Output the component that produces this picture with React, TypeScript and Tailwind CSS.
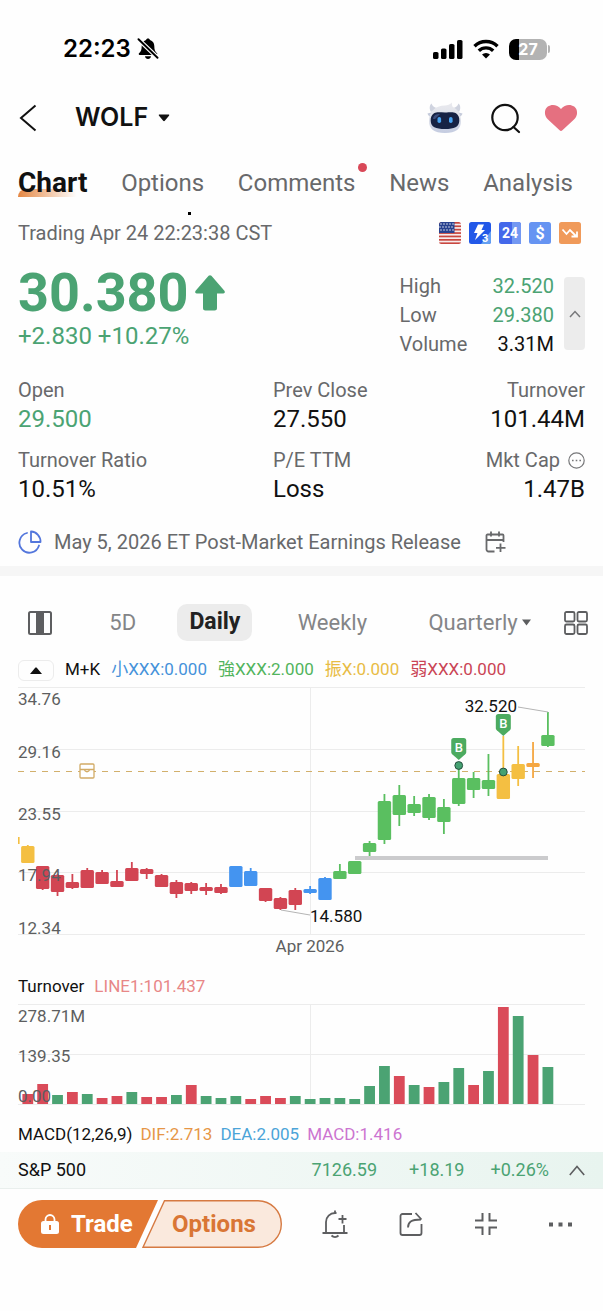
import type { ReactNode } from "react";
import clsx from "clsx";

type Tone = "red" | "green" | "blue" | "yellow" | "orange";

// tone, high, body top, body bottom, low (measured down from the top grid line)
type Candle = [Tone, number, number, number, number];

const TONES: Record<Tone, string> = {
  red: "#d24553",
  green: "#5abf60",
  blue: "#4494f0",
  yellow: "#f4bf42",
  orange: "#f5a742",
};

const CANDLES: Candle[] = [
  ["yellow", 158, 159, 176, 176],
  ["red", 179, 179, 202, 203],
  ["red", 187, 188, 205, 209],
  ["red", 187, 195, 201, 202],
  ["red", 181, 183, 201, 201],
  ["red", 183, 185, 197, 197],
  ["red", 183, 194, 200, 200],
  ["red", 175, 181, 194, 194],
  ["red", 181, 182, 187, 192],
  ["red", 187, 188, 200, 200],
  ["red", 193, 195, 207, 211],
  ["red", 195, 196, 204, 207],
  ["red", 196, 200, 204, 208],
  ["red", 197, 200, 206, 207],
  ["blue", 179, 179, 200, 200],
  ["blue", 181, 184, 199, 199],
  ["red", 201, 201, 214, 215],
  ["red", 210, 211, 222, 223],
  ["red", 201, 203, 218, 223],
  ["blue", 199, 202, 206, 207],
  ["blue", 190, 191, 213, 213],
  ["green", 177, 184, 192, 192],
  ["green", 174, 174, 187, 187],
  ["green", 154, 156, 165, 169],
  ["green", 107, 114, 153, 157],
  ["green", 98, 108, 128, 139],
  ["green", 109, 117, 126, 129],
  ["green", 107, 110, 131, 133],
  ["green", 112, 120, 135, 147],
  ["green", 79, 91, 117, 119],
  ["green", 85, 91, 103, 111],
  ["green", 67, 93, 102, 109],
  ["yellow", 49, 87, 112, 112],
  ["yellow", 59, 77, 92, 99],
  ["orange", 55, 76, 80, 91],
  ["green", 25, 48, 59, 60],
];

const TURNOVER: [number, "up" | "down"][] = [
  [10, "down"], [20, "down"], [9, "up"], [12, "down"], [10, "up"], [6, "down"],
  [8, "down"], [12, "up"], [7, "down"], [7, "down"], [9, "up"], [19, "down"],
  [8, "up"], [6, "up"], [8, "up"], [5, "down"], [8, "down"], [6, "down"],
  [8, "up"], [5, "up"], [6, "up"], [6, "up"], [5, "up"], [18, "up"],
  [38, "up"], [28, "down"], [19, "up"], [17, "down"], [22, "up"], [36, "up"],
  [19, "down"], [33, "up"], [97, "down"], [88, "up"], [49, "down"], [37, "up"],
];

const TABS = ["Chart", "Options", "Comments", "News", "Analysis"];

const centre = (i: number) => 9.8 + i * 14.86;

function IconButton({ label, children, className }: { label: string; children: ReactNode; className?: string }) {
  return (
    <button type="button" aria-label={label} className={clsx("flex items-center justify-center", className)}>
      {children}
    </button>
  );
}

function StatusBar() {
  return (
    <div className="flex h-[82px] items-center justify-between pt-4 pr-[53px] pl-[63px] text-black">
      <div className="flex items-center gap-1.5">
        <span className="font-[Inter] text-2xl font-semibold">22:23</span>
        <svg width="22" height="22" viewBox="0 0 22 22" fill="currentColor">
          <path d="M11 .5c1 0 1.800.6 2 1.500 2.800.8 4.300 3.200 4.300 6 0 4 .8 5.700 2.700 7.300.6.600.2 1.700-.6 1.700H2.600c-.8 0-1.200-1.100-.6-1.700C3.900 13.700 4.700 12 4.700 8c0-2.800 1.500-5.200 4.300-6 .2-.9 1-1.500 2-1.500Z" />
          <path d="M8 18.300h6c-.3 1.700-1.400 2.700-3 2.700s-2.700-1-3-2.700Z" />
          <path d="M0 0 22 21" stroke="#fefefe" strokeWidth="4.200" />
          <path d="M1.500 1.200 20.500 19.800" stroke="currentColor" strokeWidth="1.900" strokeLinecap="round" />
        </svg>
      </div>
      <div className="flex items-center gap-2.5">
        <svg width="30" height="20" viewBox="0 0 30 20" fill="currentColor">
          <rect x="0" y="13" width="5.500" height="7" rx="1.600" />
          <rect x="8" y="9.500" width="5.500" height="10.500" rx="1.600" />
          <rect x="16" y="5" width="5.500" height="15" rx="1.600" />
          <rect x="24" y="1" width="5.500" height="19" rx="1.600" />
        </svg>
        <svg width="26" height="20" viewBox="0 0 26 20" fill="none" stroke="currentColor" strokeWidth="3.400">
          <path d="M1.500 7.200a16.500 16.500 0 0 1 23 0" />
          <path d="M5.800 11.800a10.300 10.300 0 0 1 14.400 0" />
          <path d="M13 19.500 9 15.600a5.700 5.700 0 0 1 8 0Z" fill="currentColor" stroke="none" />
        </svg>
        <div className="flex items-center gap-px">
          <div className="flex h-[21px] w-[38px] items-center justify-center rounded-[7px] bg-linear-to-r from-black from-27% to-[#b3b3b3] to-27% font-[Inter] text-base font-bold text-white">
            27
          </div>
          <div className="h-2 w-0.5 rounded-r-full bg-[#b3b3b3]" />
        </div>
      </div>
    </div>
  );
}

function Robot() {
  return (
    <svg width="38" height="34" viewBox="0 0 38 34">
      <defs>
        <linearGradient id="shell" x1="0" y1="0" x2="0" y2="1">
          <stop offset="0" stopColor="#e9e9ee" />
          <stop offset="0.5" stopColor="#dfe2ea" />
          <stop offset="1" stopColor="#c3cbe0" />
        </linearGradient>
      </defs>
      <path d="M5 11C3 8 3.500 4 5.500 2.500 6.500 5 8 6.500 11 7Zm28 0c2-3 1.500-7-.5-8.500C31.500 5 30 6.500 27 7Z" fill="#cfd3df" />
      <path d="M1.500 12.500 7 11v5c-3 0-5-1-5.500-3.500Zm35 0L31 11v5c3 0 5-1 5.500-3.500Z" fill="#c5cbdb" />
      <path d="M19 4.500c2.500 0 5-1 7-3-.3 1.800 0 3 .8 4.500C32 8 35 14 35 20c0 8-5 12-16 12S3 28 3 20C3 11 9 4.500 19 4.500Z" fill="url(#shell)" />
      <path d="M19 11.500c5 0 8-.8 11 .8 2.500 1.500 3.500 4.500 3.300 7.700-.4 6-4.800 8-14.300 8S5 26 4.700 20c-.2-3.200.8-6.200 3.300-7.700 3-1.600 6-.8 11-.8Z" fill="#172344" />
      <path d="M7 18c.5-4 3-5 7-5l-5 5Z" fill="#3b4d7c" />
      <rect x="11.500" y="16" width="3.600" height="6" rx="1.800" fill="#49a4f2" />
      <rect x="23" y="16" width="3.600" height="6" rx="1.800" fill="#49a4f2" />
    </svg>
  );
}

function Header() {
  return (
    <header className="flex h-[72px] items-center justify-between pr-[25px] pl-[18px] text-[#111]">
      <div className="flex items-center gap-9">
        <IconButton label="Back">
          <svg width="21" height="28" viewBox="0 0 21 28" fill="none" stroke="currentColor" strokeWidth="2">
            <path d="M17.500 1.500 3 14l14.500 12.500" />
          </svg>
        </IconButton>
        <button type="button" className="flex items-center gap-2.5 font-[Inter] text-[25px] font-semibold">
          WOLF
          <svg width="12" height="8" viewBox="0 0 12 8" fill="currentColor">
            <path d="M1.500.5h9c.7 0 1 .6.5 1.200L6.800 6.800c-.4.5-1.200.5-1.600 0L1 1.700C.5 1.100.8.500 1.500.500Z" />
          </svg>
        </button>
      </div>
      <div className="flex items-center gap-6">
        <IconButton label="Assistant">
          <Robot />
        </IconButton>
        <IconButton label="Search" className="ml-0.5">
          <svg width="32" height="32" viewBox="0 0 32 32" fill="none" stroke="currentColor" strokeWidth="2.200" strokeLinecap="round">
            <circle cx="15" cy="15.500" r="12.700" />
            <path d="m23.500 25 5.500 5" />
          </svg>
        </IconButton>
        <IconButton label="Remove from watchlist" className="-ml-0.5">
          <svg width="34" height="28" viewBox="0 0 34 28" fill="#e57080">
            <path d="M15.600 26.300 4 15.500C-.4 11.300.3 5.200 3.800 2.600 7.900-.4 13.500.7 17 5c3.500-4.300 9.100-5.400 13.200-2.400 3.500 2.600 4.200 8.700-.2 12.900L18.400 26.300c-.8.8-2 .8-2.800 0Z" />
          </svg>
        </IconButton>
      </div>
    </header>
  );
}

function Tabs() {
  return (
    <nav className="flex h-[57px] items-center justify-between pr-[30px] pl-[18px] text-2xl text-[#68696b]">
      {TABS.map((tab, i) => (
        <a key={tab} href="#" className={clsx("relative", i === 0 && "text-[28px] leading-8 font-bold text-[#111]")}>
          {i === 0 && (
            <span className="absolute bottom-0.5 left-0 h-2 w-full rounded-tl-full bg-linear-to-r from-[#e58743] to-transparent to-85%" />
          )}
          <span className="relative">{tab}</span>
          {tab === "Comments" && (
            <span className="absolute -top-1 -right-3 size-[9px] rounded-full bg-[#d94858]" />
          )}
        </a>
      ))}
    </nav>
  );
}

function Badges() {
  return (
    <div className="flex gap-2">
      <svg width="22" height="22" viewBox="0 0 22 22">
        <defs>
          <clipPath id="flag">
            <rect width="22" height="22" rx="2.500" />
          </clipPath>
        </defs>
        <g clipPath="url(#flag)">
          <rect width="22" height="22" fill="#f6ecec" />
          {[0, 1, 2, 3, 4, 5, 6].map((i) => (
            <rect key={i} y={i * 3.4} width="22" height="1.700" fill="#c9473f" />
          ))}
          <rect width="15.500" height="11" fill="#29428f" />
          {[2, 5, 8].map((y) =>
            [2, 5, 8, 11, 14].map((x) => <circle key={`${x}-${y}`} cx={x - (y === 5 ? 1 : 0)} cy={y} r="0.7" fill="#fff" />),
          )}
        </g>
      </svg>
      <svg width="22" height="22" viewBox="0 0 22 22">
        <rect width="22" height="22" rx="2.500" fill="#2258e8" />
        <path d="M12 22 22 9v10.500a2.500 2.500 0 0 1-2.500 2.500Z" fill="#63a0f2" />
        <path d="m9 2.500h6L12.500 8H16L6 18l2.500-7H5Z" fill="#fff" />
        <text x="13" y="19.500" fill="#fff" className="text-[11px] font-bold">3</text>
      </svg>
      <svg width="22" height="22" viewBox="0 0 22 22">
        <rect width="22" height="22" rx="2.500" fill="#4468ea" />
        <path d="M13 0h6.500A2.500 2.500 0 0 1 22 2.500V22h-9Z" fill="#7398f2" />
        <text x="11" y="16" textAnchor="middle" fill="#fff" className="text-sm font-bold">24</text>
      </svg>
      <svg width="22" height="22" viewBox="0 0 22 22">
        <rect width="22" height="22" rx="2.500" fill="#6694f2" />
        <text x="11" y="17" textAnchor="middle" fill="#fff" className="text-base font-bold">$</text>
      </svg>
      <svg width="22" height="22" viewBox="0 0 22 22" fill="none" stroke="#fff" strokeWidth="1.800">
        <rect width="22" height="22" rx="2.500" fill="#f09a5a" stroke="none" />
        <path d="m3.500 7.500 4 4.500L11 8l6 6M18 9.500V14.500h-5.500" />
      </svg>
    </div>
  );
}

function Stat({ label, value, className, up, more }: { label: string; value: string; className?: string; up?: boolean; more?: boolean }) {
  return (
    <div className={className}>
      <dt className="flex h-[30px] items-center gap-2 text-xl text-[#68696b]">
        {label}
        {more && (
          <svg width="17" height="17" viewBox="0 0 17 17" fill="none" stroke="#77787a" strokeWidth="1.200">
            <circle cx="8.500" cy="8.500" r="7.700" />
            <path d="M4 8.500h1.600m2.100 0h1.600m2.100 0H13" strokeWidth="1.600" />
          </svg>
        )}
      </dt>
      <dd className={clsx("h-[29px] text-2xl leading-[29px]", up ? "text-[#4ba373]" : "text-[#111]")}>{value}</dd>
    </div>
  );
}

function Quote() {
  return (
    <section className="px-[18px]">
      <div className="flex h-11 items-center justify-between pr-1">
        <p className="text-xl text-[#68696b]">Trading Apr 24 22:23:38 CST</p>
        <Badges />
      </div>

      <div className="flex items-start justify-between pt-3">
        <div className="text-[#4ba373]">
          <div className="flex items-center gap-1.5">
            <span className="text-[54px] leading-[52px] font-bold">30.380</span>
            <svg width="30" height="36" viewBox="0 0 30 36" fill="currentColor">
              <path d="M13.600.8c.8-.9 2-.9 2.800 0l13 15c.9 1.200.4 2.700-1.100 2.700h-6.300V33c0 1.700-.8 2.500-2.500 2.500h-9C8.800 35.500 8 34.700 8 33V18.500H1.700C.2 18.500-.3 17 .6 15.800Z" />
            </svg>
          </div>
          <p className="text-2xl leading-[34px]">+2.830 +10.27%</p>
        </div>
        <div className="flex items-start gap-2.5 pt-[5px]">
          <dl className="grid grid-cols-[93px_auto] text-xl leading-[29px]">
            <dt className="text-[#68696b]">High</dt>
            <dd className="text-right text-[#4ba373]">32.520</dd>
            <dt className="text-[#68696b]">Low</dt>
            <dd className="text-right text-[#4ba373]">29.380</dd>
            <dt className="text-[#68696b]">Volume</dt>
            <dd className="text-right text-[#111]">3.31M</dd>
          </dl>
          <IconButton label="Collapse quote" className="mt-[5px] h-[73px] w-[21px] rounded-sm bg-[#ececec]">
            <svg width="12" height="8" viewBox="0 0 12 8" fill="none" stroke="#77787a" strokeWidth="1.500">
              <path d="m1 7 5-5.500L11 7" />
            </svg>
          </IconButton>
        </div>
      </div>

      <dl className="grid grid-cols-[255px_1fr_auto] gap-y-[11px] pt-4">
        <Stat label="Open" value="29.500" up />
        <Stat label="Prev Close" value="27.550" />
        <Stat label="Turnover" value="101.44M" className="flex flex-col items-end" />
        <Stat label="Turnover Ratio" value="10.51%" />
        <Stat label="P/E TTM" value="Loss" />
        <Stat label="Mkt Cap" value="1.47B" more className="flex flex-col items-end" />
      </dl>

      <div className="flex h-[62px] items-center pt-3.5 text-xl text-[#68696b]">
        <svg width="24" height="24" viewBox="0 0 24 24" fill="none" stroke="#5376dc" strokeWidth="1.800" strokeLinejoin="round">
          <path d="M9 3a10 10 0 1 0 12 12.500" strokeLinecap="round" />
          <path d="M13 1.500a10 10 0 0 1 9.500 10.500H13Z" />
        </svg>
        <a href="#" className="ml-3">May 5, 2026 ET Post-Market Earnings Release</a>
        <IconButton label="Add to calendar" className="ml-6">
          <svg width="22" height="22" viewBox="0 0 22 22" fill="none" stroke="#68696b" strokeWidth="1.800">
            <path d="M9.500 20.500H3.500a2 2 0 0 1-2-2V4.500a1 1 0 0 1 1-1h15a1 1 0 0 1 1 1V11M1.500 9h17M6 .5v5M14 .5v5M15.500 12.500V21M11 16.800h9.500" />
          </svg>
        </IconButton>
      </div>
    </section>
  );
}

function PeriodBar() {
  return (
    <div className="flex h-[85px] items-center justify-between pt-2 pr-[15px] pl-7 text-[22px] text-[#848587]">
      <IconButton label="Chart layout">
        <svg width="24" height="24" viewBox="0 0 24 24" fill="none" stroke="#5d5e60" strokeWidth="2">
          <rect x="1" y="1" width="22" height="22" rx="1.500" />
          <path d="M8 1h8v22H8Z" fill="#5d5e60" stroke="none" />
        </svg>
      </IconButton>
      <button type="button" className="ml-6">5D</button>
      <button type="button" className="ml-2 h-[37px] rounded-[10px] bg-[#ececec] px-3 text-[23px] font-bold text-[#222]">
        Daily
      </button>
      <button type="button" className="ml-3">Weekly</button>
      <button type="button" className="ml-7 flex items-center gap-1">
        Quarterly
        <svg width="9" height="7" viewBox="0 0 9 7" fill="#5d5e60">
          <path d="M0 .5h9L4.500 6.500Z" />
        </svg>
      </button>
      <IconButton label="Indicators">
        <svg width="24" height="24" viewBox="0 0 24 24" fill="none" stroke="#5d5e60" strokeWidth="1.800">
          <rect x="1" y="1" width="9.500" height="9.500" rx="1.500" />
          <rect x="13.500" y="1" width="9.500" height="9.500" rx="1.500" />
          <rect x="1" y="13.500" width="9.500" height="9.500" rx="1.500" />
          <rect x="13.500" y="13.500" width="9.500" height="9.500" rx="1.500" />
        </svg>
      </IconButton>
    </div>
  );
}

function BuyPin({ x, y }: { x: number; y: number }) {
  return (
    <g transform={`translate(${x} ${y})`}>
      <path d="M-5 0H5a2.500 2.500 0 0 1 2.500 2.500V14c0 1-.3 1.500-1 2.200L0 22l-6.500-5.800c-.7-.7-1-1.200-1-2.200V2.500A2.500 2.500 0 0 1-5 0Z" fill="#4cab60" />
      <text y="14" textAnchor="middle" fill="#fff" className="text-[13px] font-medium">B</text>
    </g>
  );
}

function PriceChart() {
  return (
    <svg viewBox="0 0 567 276" className="block w-full text-[17px]" role="img" aria-label="Daily candles">
      <g stroke="#ececec">
        {[0.5, 62.5, 124.5, 185.5, 247.5].map((y) => (
          <path key={y} d={`M0 ${y}H567`} />
        ))}
        <path d="M292.500 0V247" />
      </g>
      <path d="M0 84.500H567" stroke="#d2b06c" strokeDasharray="6 6" />
      <g fill="#fff" stroke="#d2ab66" strokeWidth="1.300">
        <rect x="62" y="77" width="14" height="14" rx="1" />
        <path d="M62 82.500H76M66.500 82.500c.5 3 4.500 3 5 0" fill="none" />
      </g>
      <rect x="0" y="150" width="1.600" height="7" fill={TONES.yellow} />
      {CANDLES.map(([tone, high, top, bottom, low], i) => (
        <g key={i} fill={TONES[tone]}>
          <rect x={centre(i) - 0.9} y={high} width="1.800" height={low - high} />
          <rect x={centre(i) - 6.7} y={top} width="13.400" height={bottom - top} rx="1.500" />
        </g>
      ))}
      <rect x="337" y="169" width="193" height="4" fill="#cbcbcd" />
      <g stroke="#b5b5b5">
        <path d="M500 20 530 25M263 223l29 5" />
      </g>
      <BuyPin x={centre(29)} y={51} />
      <BuyPin x={centre(32)} y={27} />
      <g fill="#45a172" stroke="#27503f" strokeWidth="1">
        <circle cx={centre(29)} cy="78.500" r="3.900" />
        <circle cx={centre(32)} cy="85" r="3.900" />
      </g>
      <g fill="#5d5e60">
        <text x="0" y="18">34.76</text>
        <text x="0" y="71">29.16</text>
        <text x="0" y="133">23.55</text>
        <text x="0" y="194">17.94</text>
        <text x="0" y="247">12.34</text>
        <text x="292" y="265" textAnchor="middle">Apr 2026</text>
      </g>
      <g fill="#111">
        <text x="499" y="25" textAnchor="end">32.520</text>
        <text x="292" y="235">14.580</text>
      </g>
    </svg>
  );
}

function TurnoverChart() {
  return (
    <svg viewBox="0 0 567 101" className="block w-full text-[17px]" role="img" aria-label="Turnover bars">
      <g stroke="#ececec">
        <path d="M0 .5H567M0 50.500H567M0 100.500H567M292.500 0V100" />
      </g>
      {TURNOVER.map(([height, side], i) => (
        <rect key={i} x={centre(i) - 5.4} y={100 - height} width="10.800" height={height} fill={side === "up" ? "#4ba373" : "#da4b59"} />
      ))}
      <g fill="#5d5e60">
        <text x="0" y="18">278.71M</text>
        <text x="0" y="58">139.35</text>
        <text x="0" y="98">0.00</text>
      </g>
    </svg>
  );
}

function Charts() {
  return (
    <section className="px-[18px] text-[17px]">
      <div className="flex h-[18px] items-center gap-[11px] whitespace-nowrap">
        <IconButton label="Hide indicators" className="h-[21px] w-9 rounded-md border border-[#ececec]">
          <svg width="12" height="7" viewBox="0 0 12 7" fill="#111">
            <path d="m0 7 5-6c.5-.6 1.500-.6 2 0l5 6Z" />
          </svg>
        </IconButton>
        <span className="text-[#111]">M+K</span>
        <span className="text-[#4592da]">小XXX:0.000</span>
        <span className="text-[#52b45c]">強XXX:2.000</span>
        <span className="text-[#e8bc45]">振X:0.000</span>
        <span className="text-[#ca4555]">弱XXX:0.000</span>
      </div>
      <div className="pt-2">
        <PriceChart />
      </div>
      <div className="flex h-[41px] items-center gap-2.5 pt-1.5">
        <span className="text-[#111]">Turnover</span>
        <span className="text-[#e88787]">LINE1:101.437</span>
      </div>
      <TurnoverChart />
      <div className="flex h-[47px] items-center gap-2 pt-3">
        <span className="text-[#111]">MACD(12,26,9)</span>
        <span className="text-[#e69646]">DIF:2.713</span>
        <span className="text-[#4ba4d8]">DEA:2.005</span>
        <span className="text-[#cc74d0]">MACD:1.416</span>
      </div>
    </section>
  );
}

function IndexBar() {
  return (
    <div className="flex h-[37px] items-center border-b border-[#e9efed] bg-linear-to-r from-[#f8fbfa] to-[#e8f4ef] px-[18px] text-lg text-[#4ba373]">
      <span className="flex-1 text-[#111]">S&amp;P 500</span>
      <span>7126.59</span>
      <span className="ml-8">+18.19</span>
      <span className="ml-[26px]">+0.26%</span>
      <IconButton label="Expand indices" className="ml-5">
        <svg width="16" height="11" viewBox="0 0 16 11" fill="none" stroke="#5d5e60" strokeWidth="1.600">
          <path d="m.8 10 7.200-8.500L15.200 10" />
        </svg>
      </IconButton>
    </div>
  );
}

function ActionBar() {
  return (
    <footer className="flex items-center justify-between pt-[11px] pr-[30px] pb-[63px] pl-[18px]">
      <div className="relative flex h-12 w-[264px] text-2xl font-bold">
        <svg width="264" height="48" viewBox="0 0 264 48" className="absolute inset-0">
          <path d="M24 0H140L118 48H24A24 24 0 0 1 24 0Z" fill="#e37833" />
          <path d="M146.500.7H240a23.300 23.300 0 0 1 0 46.600H125Z" fill="#fae9dd" stroke="#d67a42" strokeWidth="1.400" />
        </svg>
        <button type="button" className="relative flex w-[132px] items-center gap-3 pl-[23px] text-white">
          <svg width="18" height="20" viewBox="0 0 18 20" fill="currentColor">
            <path d="M4.500 8V5.500a4.500 4.500 0 0 1 9 0V8" fill="none" stroke="currentColor" strokeWidth="1.800" />
            <rect y="7" width="18" height="13" rx="2.500" />
            <path d="M9 11v5" stroke="#e37833" strokeWidth="2" />
          </svg>
          Trade
        </button>
        <button type="button" className="relative flex-1 pr-1 text-[#d97635]">Options</button>
      </div>
      <div className="flex items-center gap-[50px] text-[#5d5e60]">
        <IconButton label="Add alert">
          <svg width="26" height="28" viewBox="0 0 26 28" fill="none" stroke="currentColor" strokeWidth="1.800">
            <path d="M.5 23H25.500M4 23V12a9 9 0 0 1 9-9h1.500M13 3V.5M22 15v8M16.500 9h8M20.500 5v8.500" />
            <path d="M9.500 25.500c2 2 5 2 7 0" />
          </svg>
        </IconButton>
        <IconButton label="Share">
          <svg width="26" height="26" viewBox="0 0 26 26" fill="none" stroke="currentColor" strokeWidth="1.800">
            <path d="M14 3H4.500a2 2 0 0 0-2 2v17a2 2 0 0 0 2 2H21.500a2 2 0 0 0 2-2v-9" />
            <path d="M10 16.500C10 11 13 8.500 23 8.500M17.500 2l6 6.500" />
          </svg>
        </IconButton>
        <IconButton label="Exit full view">
          <svg width="24" height="24" viewBox="0 0 24 24" fill="none" stroke="currentColor" strokeWidth="2">
            <path d="M8.500 1v7.500H1M15.500 1v7.500H23M8.500 23v-7.500H1M15.500 23v-7.500H23" />
          </svg>
        </IconButton>
        <IconButton label="More">
          <svg width="25" height="5" viewBox="0 0 25 5" fill="currentColor">
            <path d="M1 .5h4v4H1ZM10.500.5h4v4h-4ZM20 .5h4v4h-4Z" />
          </svg>
        </IconButton>
      </div>
    </footer>
  );
}

export default function App() {
  return (
    <div className="min-h-screen bg-[#fefefe] font-[Roboto,'Noto_Sans_CJK_TC',sans-serif]">
      <StatusBar />
      <Header />
      <div className="relative">
        <Tabs />
        <span className="absolute -bottom-1 left-[188px] size-[3px] bg-black" />
      </div>
      <Quote />
      <div className="h-[10px] bg-[#f6f6f6]" />
      <PeriodBar />
      <Charts />
      <IndexBar />
      <ActionBar />
    </div>
  );
}
